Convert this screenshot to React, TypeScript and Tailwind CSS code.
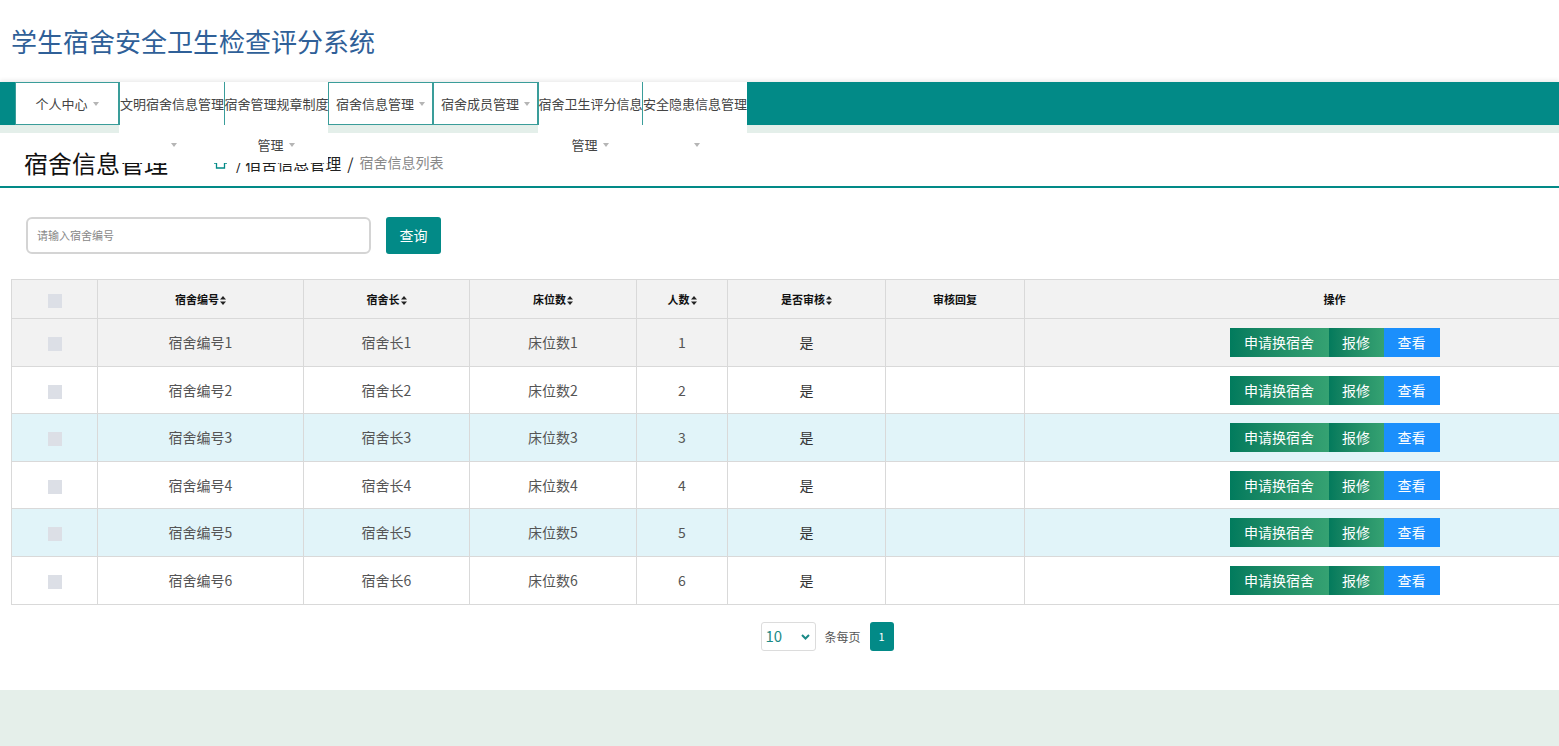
import React from "react";

const TEAL = "#028a87";

function Caret() {
  return <span className="ml-[5px] inline-block h-0 w-0 border-x-[3.5px] border-t-[4px] border-x-transparent border-t-[#b5b5b5] align-middle" />;
}

function SortIcon() {
  return (
    <svg width="6" height="9" viewBox="0 0 6 9" className="ml-[1px] inline-block align-[-1px]">
      <path d="M3 0 L6 3.6 L0 3.6 Z" fill="#222" />
      <path d="M3 9 L6 5.4 L0 5.4 Z" fill="#222" />
    </svg>
  );
}

type NavItem = { w: number; l1: string; l2?: string; caret1?: boolean };
const navItems: NavItem[] = [
  { w: 104, l1: "个人中心", caret1: true },
  { w: 105, l1: "文明宿舍信息管理", l2: "" },
  { w: 104, l1: "宿舍管理规章制度", l2: "管理" },
  { w: 105, l1: "宿舍信息管理", caret1: true },
  { w: 105, l1: "宿舍成员管理", caret1: true },
  { w: 104, l1: "宿舍卫生评分信息", l2: "管理" },
  { w: 105, l1: "安全隐患信息管理", l2: "" },
];

const cols = [86, 206, 166, 167, 91, 158, 139, 620];
const headers: { t: string; sort: boolean }[] = [
  { t: "", sort: false },
  { t: "宿舍编号", sort: true },
  { t: "宿舍长", sort: true },
  { t: "床位数", sort: true },
  { t: "人数", sort: true },
  { t: "是否审核", sort: true },
  { t: "审核回复", sort: false },
  { t: "操作", sort: false },
];
const rowBgs = ["bg-[#f2f2f2]", "bg-white", "bg-[#e1f4f9]", "bg-white", "bg-[#e1f4f9]", "bg-white"];
const rowHs = ["h-[48px]", "h-[47px]", "h-[48px]", "h-[47px]", "h-[48px]", "h-[48px]"];

export default function App() {
  return (
    <div className="min-h-[746px] w-full overflow-hidden bg-white font-['Noto_Sans_CJK_SC','Noto_Sans',sans-serif]">
      {/* header */}
      <div className="flex h-[82px] items-center pl-[11px]">
        <h1 className="text-[26px] leading-none text-[#2f6098]">学生宿舍安全卫生检查评分系统</h1>
      </div>

      {/* nav */}
      <div className="relative z-10 h-[43px] bg-[#028a87] pl-[15px] shadow-[0_-2px_4px_rgba(0,0,0,0.08)]">
        <div className="flex items-start">
          {navItems.map((it, i) => (
            <div key={i} style={{ width: it.w }} className="shrink-0 bg-white text-[13px] text-[#444]">
              {it.l2 === undefined ? (
                <div className="flex h-[43px] items-center justify-center whitespace-nowrap border border-[#3a9d9a]">
                  {it.l1}
                  <Caret />
                </div>
              ) : (
                <>
                  <div className="flex h-[43px] items-center justify-center whitespace-nowrap border-l border-[#3a9d9a]">
                    {it.l1}
                  </div>
                  <div className="flex h-[38px] items-center justify-center whitespace-nowrap pt-[2px]">
                    {it.l2}
                    <Caret />
                  </div>
                </>
              )}
            </div>
          ))}
        </div>
      </div>
      <div className="h-[8px] bg-[#e4efea]" />

      {/* title row */}
      <div className="flex h-[55px] items-center border-b-2 border-[#028a87] pl-[24px] pt-[6px]">
        <span className="text-[24px] leading-none text-[#111]">宿舍信息管理</span>
        <div className="ml-[46px] flex items-center text-[16px] text-[#222]">
          <svg width="13" height="12" viewBox="0 0 13 12" className="mr-[6px]">
            <path d="M6.5 1 L12 6 H10.5 V11 H2.5 V6 H1 Z" fill="none" stroke={TEAL} strokeWidth="1.3" />
          </svg>
          <span className="mx-[3px]">/</span>
          <span>宿舍信息管理</span>
          <span className="mx-[6px]">/</span>
          <span className="text-[14px] text-[#888]">宿舍信息列表</span>
        </div>
      </div>

      {/* content */}
      <div className="w-[1655px]">
        <div className="flex items-center pl-[26px] pt-[29px]">
          <div className="flex h-[37px] w-[345px] items-center rounded-[6px] border-2 border-[#d4d4d4] pl-[9px] text-[11px] text-[#888]">
            请输入宿舍编号
          </div>
          <button className="ml-[15px] h-[37px] w-[55px] rounded-[3px] bg-[#028a87] text-[14px] text-white">查询</button>
        </div>

        <div className="pl-[11px] pt-[25px]">
          <table className="w-[1633px] table-fixed border-collapse text-center">
            <colgroup>
              {cols.map((w, i) => (
                <col key={i} style={{ width: w }} />
              ))}
            </colgroup>
            <thead>
              <tr className="h-[39px] bg-[#f2f2f2]">
                {headers.map((h, i) => (
                  <th key={i} className="border border-[#d9d9d9] text-[11px] font-bold text-[#111]">
                    {i === 0 ? (
                      <span className="inline-block h-[14px] w-[14px] bg-[#dcdfe6] align-middle" />
                    ) : (
                      <>
                        {h.t}
                        {h.sort && <SortIcon />}
                      </>
                    )}
                  </th>
                ))}
              </tr>
            </thead>
            <tbody>
              {[1, 2, 3, 4, 5, 6].map((n, r) => (
                <tr key={n} className={`${rowBgs[r]} ${rowHs[r]} text-[14px] text-[#555]`}>
                  <td className="border border-[#d9d9d9]">
                    <span className="inline-block h-[14px] w-[14px] bg-[#dcdfe6] align-middle" />
                  </td>
                  <td className="border border-[#d9d9d9]">宿舍编号{n}</td>
                  <td className="border border-[#d9d9d9]">宿舍长{n}</td>
                  <td className="border border-[#d9d9d9]">床位数{n}</td>
                  <td className="border border-[#d9d9d9]">{n}</td>
                  <td className="border border-[#d9d9d9] text-[#333]">是</td>
                  <td className="border border-[#d9d9d9]"></td>
                  <td className="border border-[#d9d9d9]">
                    <div className="flex justify-center">
                      <button className="h-[29px] w-[99px] bg-gradient-to-r from-[#017b5d] to-[#35a272] text-[14px] text-white">申请换宿舍</button>
                      <button className="h-[29px] w-[55px] bg-gradient-to-r from-[#037a5c] to-[#35a272] text-[14px] text-white">报修</button>
                      <button className="h-[29px] w-[56px] bg-[#1b8ffc] text-[14px] text-white">查看</button>
                    </div>
                  </td>
                </tr>
              ))}
            </tbody>
          </table>
        </div>

        <div className="flex items-center justify-center pt-[17px]">
          <div className="flex h-[29px] w-[55px] items-center justify-between rounded-[3px] border border-[#dcdcdc] pl-[3px] pr-[5px] text-[15px] text-[#1b8a87]">
            <span>10</span>
            <svg width="9" height="6" viewBox="0 0 9 6">
              <path d="M1 1 L4.5 4.5 L8 1" fill="none" stroke="#1b8a87" strokeWidth="2" />
            </svg>
          </div>
          <span className="ml-[8px] text-[12px] text-[#555]">条每页</span>
          <div className="ml-[9px] flex h-[29px] w-[24px] items-center justify-center rounded-[3px] bg-[#028a87] text-[11px] text-white">1</div>
        </div>
      </div>

      <div className="mt-[39px] h-[60px] bg-[#e5efea]" />
    </div>
  );
}
